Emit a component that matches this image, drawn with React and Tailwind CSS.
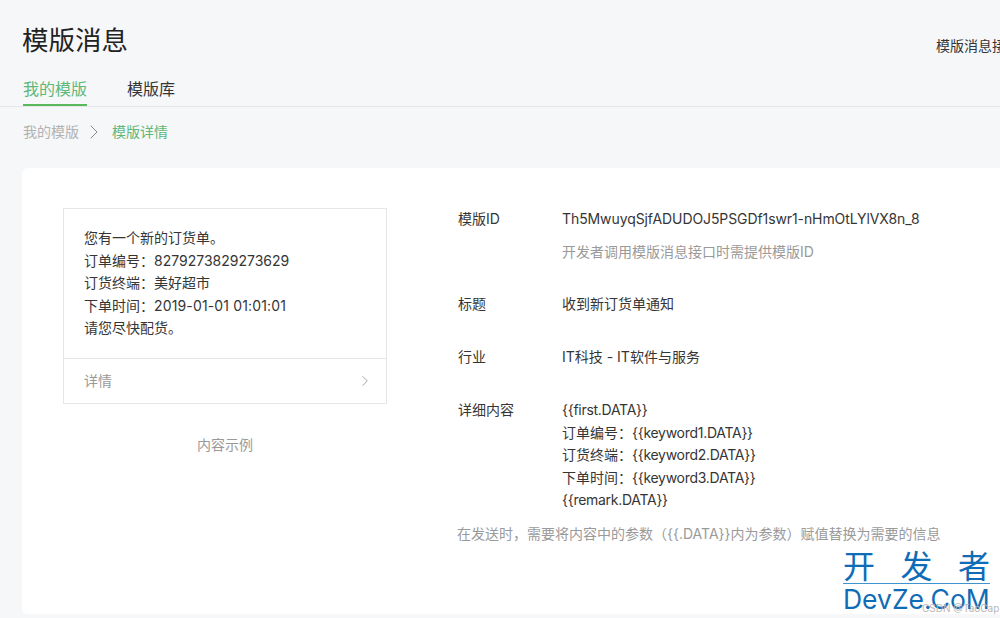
import { ChevronRight } from "lucide-react";

const font = "font-['Inter','Noto_Sans_CJK_SC',sans-serif]";

function DetailRow({ label, className, children }) {
  return (
    <div className={"ml-px flex " + className}>
      <div className="w-[104px] shrink-0 text-[#353535]">{label}</div>
      <div className="text-[#353535]">{children}</div>
    </div>
  );
}

function Param({ children }) {
  return <span className="tracking-[-0.28px]">{children}</span>;
}

export default function App() {
  return (
    <div className={"relative h-[618px] w-[1000px] overflow-hidden bg-[#f6f7f9] text-sm " + font}>
      <header className="flex h-[78px] items-start justify-between pl-[22px]">
        <h1 className="mt-[22px] text-[26.5px] leading-9 font-normal text-[#222]">模版消息</h1>
        <a className="mt-[36px] w-16 overflow-hidden leading-5 whitespace-nowrap text-[#353535]">模版消息接口文档</a>
      </header>

      <nav className="flex h-[29px] gap-10 border-b border-[#e4e6e8] pl-[23px] text-base leading-[22px]">
        <div className="h-[28px] border-b-2 border-[#5cb85c] text-[#5fb878]">我的模版</div>
        <div className="text-[#353535]">模版库</div>
      </nav>

      <div className="flex h-[61px] items-center pb-[12px] pl-[23px] leading-5">
        <span className="text-[#b2b2b2]">我的模版</span>
        <ChevronRight className="mr-[7px] ml-[3px] h-6 w-6 text-[#888]" strokeWidth={1} />
        <span className="-ml-px text-[#5fb878]">模版详情</span>
      </div>

      <main className="ml-[22px] flex h-[446px] w-[1000px] rounded-md bg-white pt-10 pl-[41px]">
        <section className="w-[324px] shrink-0">
          <div className="border border-[#e4e6e8]">
            <div className="h-[149px] px-5 pt-[18px] leading-[22.5px] text-[#353535]">
              <p>您有一个新的订货单。</p>
              <p>订单编号：8279273829273629</p>
              <p>订货终端：美好超市</p>
              <p>
                下单时间：<span className="tracking-[0.15px]">2019-01-01 01:01:01</span>
              </p>
              <p>请您尽快配货。</p>
            </div>
            <div className="flex h-[45px] items-center justify-between border-t border-[#e4e6e8] pr-[12px] pl-5 text-[#9a9a9a]">
              <span>详情</span>
              <ChevronRight className="h-[18px] w-[18px] text-[#888]" strokeWidth={1} />
            </div>
          </div>
          <p className="mt-[31px] text-center leading-5 text-[#9a9a9a]">内容示例</p>
        </section>

        <section className="ml-[70px] flex-1">
          <DetailRow label="模版ID" className="mt-[1px] leading-5">
            <div className="tracking-[-0.09px]">Th5MwuyqSjfADUDOJ5PSGDf1swr1-nHmOtLYlVX8n_8</div>
            <div className="mt-[13px] text-[#9a9a9a]">开发者调用模版消息接口时需提供模版ID</div>
          </DetailRow>
          <DetailRow label="标题" className="mt-[32px] leading-5">收到新订货单通知</DetailRow>
          <DetailRow label="行业" className="mt-[33px] leading-5">IT科技 - IT软件与服务</DetailRow>
          <DetailRow label="详细内容" className="mt-[32px] leading-[22.5px]">
            <p><Param>{"{{first.DATA}}"}</Param></p>
            <p>订单编号：<Param>{"{{keyword1.DATA}}"}</Param></p>
            <p>订货终端：<Param>{"{{keyword2.DATA}}"}</Param></p>
            <p>下单时间：<Param>{"{{keyword3.DATA}}"}</Param></p>
            <p><Param>{"{{remark.DATA}}"}</Param></p>
          </DetailRow>
          <p className="mt-[12px] leading-5 text-[#9a9a9a]">
            {"在发送时，需要将内容中的参数（{{.DATA}}内为参数）赋值替换为需要的信息"}
          </p>
        </section>
      </main>

      <div className="absolute top-[551px] left-[843px] w-[147px] text-[#0f6cb6]">
        <div className="flex justify-between border-b border-[#3f94cf] text-[32px] leading-[32px]">
          <span>开</span>
          <span>发</span>
          <span>者</span>
        </div>
        <div className="text-[26.5px] leading-[30px] whitespace-nowrap">DevZe.CoM</div>
      </div>
      <div className="absolute top-[602px] left-[922px] text-[10px] leading-3 whitespace-nowrap text-[#b8b8b8]">CSDN @TaoCap</div>
    </div>
  );
}
